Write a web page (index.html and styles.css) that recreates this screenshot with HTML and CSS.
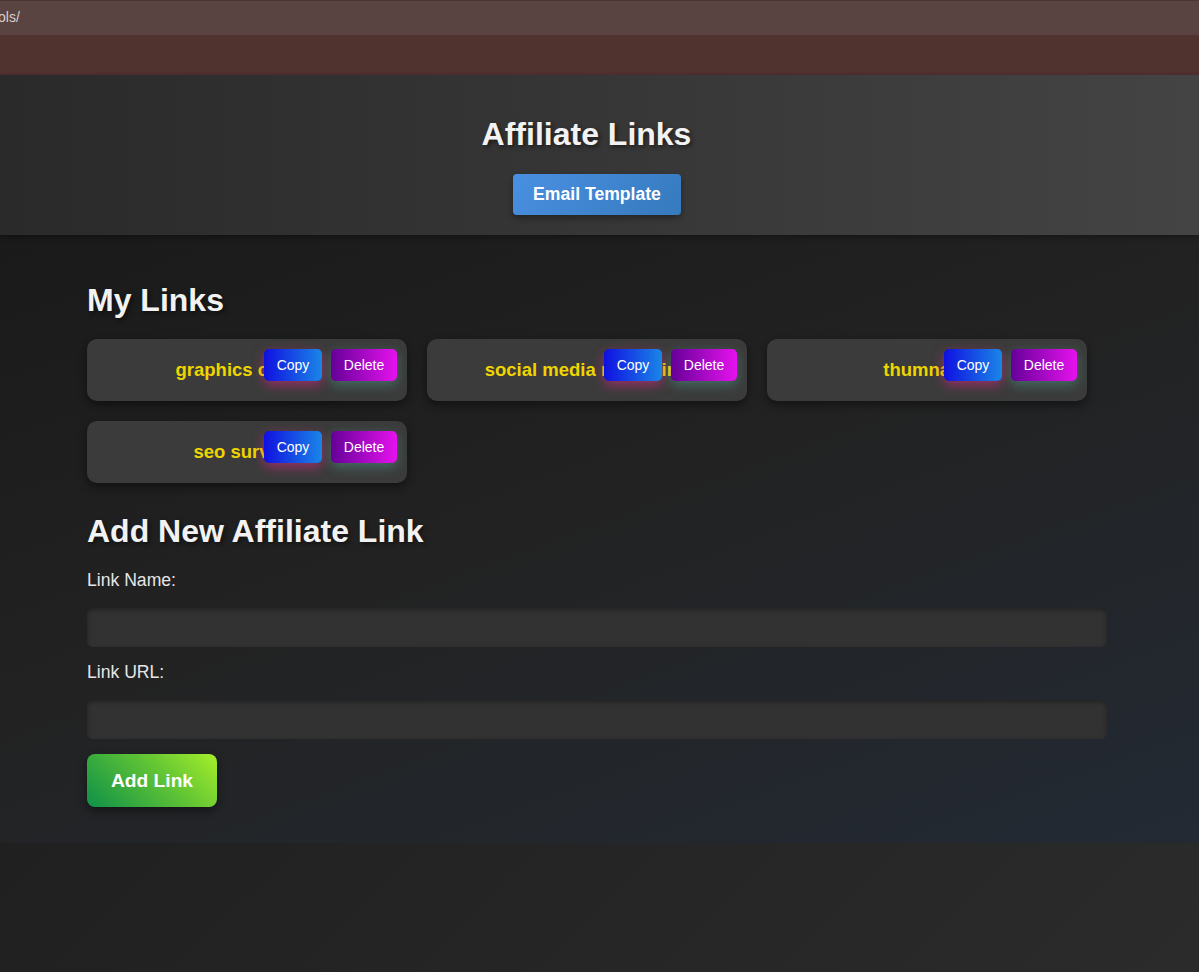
FILE: index.html
```html
<!DOCTYPE html>
<html lang="en">
<head>
<meta charset="utf-8">
<title>Affiliate Links</title>
<link rel="stylesheet" href="styles.css">
</head>
<body>
<div class="addr-bar"><span class="addr-text">ols/</span></div>
<div class="tab-band"></div>
<header class="page-header">
  <h1 class="title">Affiliate Links</h1>
  <button class="email-btn">Email Template</button>
</header>
<main class="main">
  <div class="container">
    <h2 class="section-title">My Links</h2>
    <div class="links-grid">
      <div class="link-card">
        <span class="link-name">graphics course</span>
        <div class="card-actions"><button class="btn-copy">Copy</button><button class="btn-delete">Delete</button></div>
      </div>
      <div class="link-card">
        <span class="link-name">social media marketing</span>
        <div class="card-actions"><button class="btn-copy">Copy</button><button class="btn-delete">Delete</button></div>
      </div>
      <div class="link-card">
        <span class="link-name">thumnails</span>
        <div class="card-actions"><button class="btn-copy">Copy</button><button class="btn-delete">Delete</button></div>
      </div>
      <div class="link-card">
        <span class="link-name">seo surveys</span>
        <div class="card-actions"><button class="btn-copy">Copy</button><button class="btn-delete">Delete</button></div>
      </div>
    </div>
    <h2 class="section-title add-title">Add New Affiliate Link</h2>
    <form class="add-form">
      <label class="field-label" for="lname">Link Name:</label>
      <input class="field-input" id="lname" type="text">
      <label class="field-label" for="lurl">Link URL:</label>
      <input class="field-input" id="lurl" type="text">
      <button type="button" class="add-btn">Add Link</button>
    </form>
  </div>
</main>
</body>
</html>
```
FILE: styles.css
```css
* { box-sizing: border-box; }
html, body { margin: 0; padding: 0; }
body {
  font-family: "Liberation Sans", Arial, sans-serif;
  background: linear-gradient(135deg, #191919 0%, #2b2b2b 100%);
  min-height: 972px;
  color: #f0f0f0;
}
.addr-bar {
  height: 35px;
  background: #594442;
  border-top: 1px solid #4d3331;
  display: flex;
  align-items: center;
}
.addr-text {
  font-size: 14px;
  color: #d9cfcb;
  margin-left: -2px;
  margin-top: -2px;
}
.tab-band {
  height: 40px;
  background: #50322f;
}
.page-header {
  height: 160px;
  background: linear-gradient(90deg, #2a2a2a 0%, #353535 45%, #444444 100%);
  display: flex;
  flex-direction: column;
  align-items: center;
  padding-top: 41px;
  position: relative;
  z-index: 1;
  box-shadow: 0 2px 6px rgba(0,0,0,0.35);
}
.title {
  margin: 0;
  font-size: 32px;
  line-height: 37px;
  font-weight: bold;
  color: #f2f2f2;
  text-shadow: 2px 2px 4px rgba(0,0,0,0.5);
  padding-right: 26px;
}
.email-btn {
  margin-top: 21px;
  margin-right: 5px;
  font-family: inherit;
  font-size: 17.6px;
  font-weight: bold;
  color: #fff;
  border: none;
  border-radius: 4px;
  padding: 10px 20px;
  height: 41px;
  width: 168px;
  background: linear-gradient(135deg, #4a90e2, #357abd);
  box-shadow: 0 3px 6px rgba(0,0,0,0.35);
}
.main {
  height: 608px;
  background: linear-gradient(160deg, #1a1a1a 0%, #222 45%, #232a34 100%);
  padding: 47px 0 0 87px;
}
.container { width: 1020px; }
.section-title {
  margin: 0 0 20px;
  font-size: 32px;
  line-height: 37px;
  font-weight: bold;
  color: #f2f2f2;
  text-shadow: 2px 2px 4px rgba(0,0,0,0.5);
}
.links-grid {
  display: grid;
  grid-template-columns: repeat(3, 320px);
  column-gap: 20px;
  row-gap: 20px;
}
.link-card {
  position: relative;
  height: 62px;
  background: #3b3b3b;
  border-radius: 10px;
  box-shadow: 0 4px 10px rgba(0,0,0,0.45);
  display: flex;
  align-items: center;
  justify-content: center;
}
.link-name {
  font-size: 18.5px;
  line-height: 22px;
  font-weight: bold;
  color: #eed500;
  white-space: nowrap;
}
.card-actions {
  position: absolute;
  top: 10px;
  right: 10px;
  display: flex;
  gap: 9px;
}
.btn-copy, .btn-delete {
  font-family: inherit;
  font-size: 14px;
  color: #fff;
  border: none;
  border-radius: 5px;
  height: 32px;
  padding: 0 12px;
}
.btn-copy {
  width: 58px;
  background: linear-gradient(90deg, #1010e0, #1a86e8);
  box-shadow: 0 4px 12px rgba(230, 40, 140, 0.55);
}
.btn-delete {
  width: 66px;
  background: linear-gradient(90deg, #650098, #e612ee);
  box-shadow: 0 4px 12px rgba(90, 200, 180, 0.35);
}
.add-title {
  margin-top: 30px;
  margin-bottom: 20px;
}
.add-form {
  display: flex;
  flex-direction: column;
  align-items: flex-start;
}
.field-label {
  font-size: 17.6px;
  line-height: 20px;
  color: #e6e6e6;
  margin-bottom: 18px;
}
.field-input {
  width: 100%;
  height: 39px;
  background: #323232;
  border: none;
  border-radius: 5px;
  box-shadow: inset 0 2px 5px rgba(0,0,0,0.35);
  margin-bottom: 15px;
  color: #eee;
  font-family: inherit;
  font-size: 16px;
  padding: 0 10px;
}
.add-btn {
  font-family: inherit;
  font-size: 19.2px;
  font-weight: bold;
  color: #fff;
  border: none;
  border-radius: 8px;
  width: 130px;
  height: 53px;
  padding: 0;
  background: linear-gradient(45deg, #0f9149 0%, #5cc135 55%, #a6ee2a 100%);
  box-shadow: 0 4px 10px rgba(0,0,0,0.45);
}
```
